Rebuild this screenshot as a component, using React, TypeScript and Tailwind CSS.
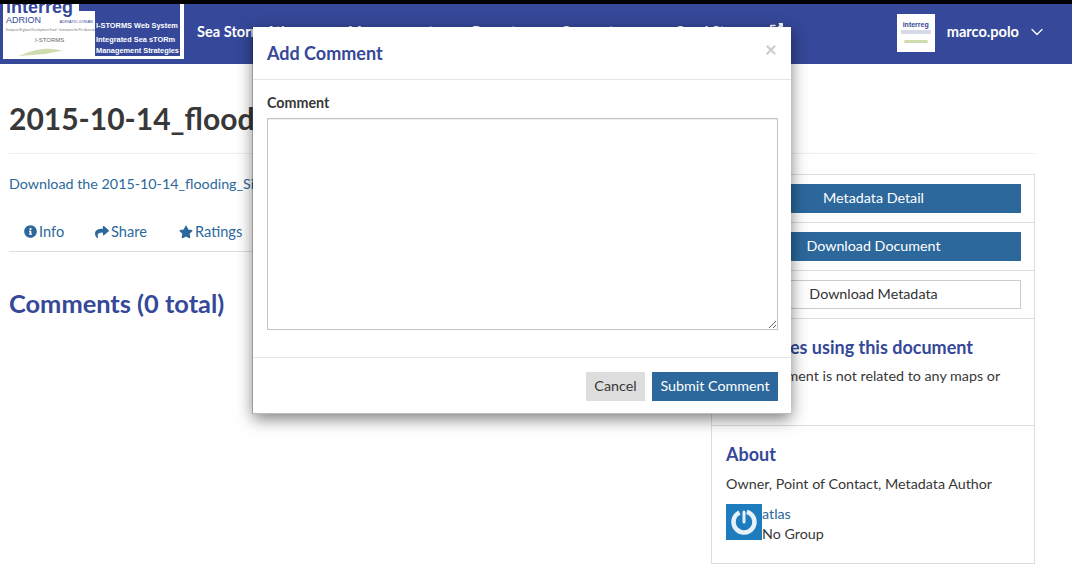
import { ChevronDown } from "lucide-react";
import { FaInfoCircle, FaShare, FaStar, FaExternalLinkAlt } from "react-icons/fa";

function Logo() {
  return (
    <div className="flex h-[55px] w-[181px] shrink-0 bg-white pr-[4px] pb-[3px]">
      <div className="relative w-[92px] shrink-0 overflow-hidden">
        <div className="-mt-[6px] pl-[3px] font-['Liberation_Sans',sans-serif] text-[18px] font-bold leading-[18px] text-[#354899]">interreg</div>
        <div className="flex items-baseline justify-between pl-[3px] pr-[2px] text-[#354899]">
          <span className="font-['Liberation_Sans',sans-serif] text-[9px] leading-[8px]">ADRION</span>
          <span className="font-['Liberation_Sans',sans-serif] text-[4px] leading-[8px]">ADRIATIC-IONIAN</span>
        </div>
        <div className="mt-[2px] h-[4px] overflow-hidden whitespace-nowrap pl-[3px] text-[3px] leading-[4px] text-[#777]">European Regional Development Fund - Instrument for Pre-Accession II Fund</div>
        <div className="mt-[4px] pl-[32px] font-['Liberation_Sans',sans-serif] text-[6px] leading-[8px] text-[#666]">I-STORMS</div>
        <svg className="mt-[4px] ml-[14px]" width="48" height="9" viewBox="0 0 48 9">
          <path d="M1 8C10 5 16 2 27 1c8-1 13 1 20 2-8 0-11 2-19 3-10 1-16 1-27 2z" fill="#cfdcae" />
        </svg>
        <div className="absolute top-0 right-[0px] h-[7px] w-[16px] bg-[#354899]" />
      </div>
      <div className="flex flex-1 flex-col justify-between bg-[#354899] pt-[16px] pb-[0px] pl-[1px] font-['Liberation_Sans',sans-serif] text-[7.4px] font-bold leading-[11px] text-white">
        <div className="whitespace-nowrap">I-STORMS Web System</div>
        <div className="whitespace-nowrap">Integrated Sea sTORm<br />Management Strategies</div>
      </div>
    </div>
  );
}

function SideButton({ label, variant }: { label: string; variant: "primary" | "default" }) {
  return (
    <div className="border-b border-[#ddd] pl-[14px] pr-[13px] py-[9px]">
      <div className={variant === "primary"
        ? "flex h-[29px] items-center justify-center bg-[#2c689c] pb-[1px] text-white"
        : "flex h-[29px] items-center justify-center border border-[#ccc] bg-white pb-[1px] text-[#333]"}>
        {label}
      </div>
    </div>
  );
}

function PowerAvatar() {
  return (
    <div className="flex h-[36px] w-[36px] shrink-0 items-center justify-center bg-[#1c7cbd]">
      <svg width="28" height="28" viewBox="0 0 28 28" fill="none" stroke="#e6f1f8">
        <circle cx="14" cy="14" r="10.5" strokeWidth="4.5" strokeDasharray="58 8" transform="rotate(-74 14 14)" />
        <path d="M14 4v10" strokeWidth="3" strokeLinecap="round" />
      </svg>
    </div>
  );
}

export default function App() {
  return (
    <div className="relative h-[584px] w-[1072px] overflow-hidden bg-white font-['Lato',sans-serif] text-[14.3px] text-[#383838]">
      {/* Navbar */}
      <header className="flex h-[64px] items-start border-t-[4px] border-black bg-[#354899]">
        <div className="ml-[3px]"><Logo /></div>
        <nav className="ml-[13px] flex h-[55px] items-center whitespace-nowrap text-[14.6px] font-bold text-white">
          <span className="w-[151px]">Sea Storm Atlas</span>
          <span className="w-[124px]">Management</span>
          <span className="w-[90px]">Reports</span>
          <span className="w-[114px]">Support</span>
          <span className="w-[94px]">Send Story</span>
          <FaExternalLinkAlt size={13} className="-mt-[4px]" />
        </nav>
        <div className="ml-auto mr-[25px] flex h-[55px] items-center text-[14.6px] font-bold text-white">
          <div className="mt-[3px] mr-[12px] flex h-[38px] w-[38px] flex-col items-center bg-white pt-[7px]">
            <div className="font-['Liberation_Sans',sans-serif] text-[7px] font-bold leading-[7px] text-[#354899]">interreg</div>
            <div className="mt-[2px] h-[4px] w-[30px] bg-[#d5d9e8]" />
            <div className="mt-[6px] h-[3px] w-[24px] rounded-full bg-[#cfdcae]" />
          </div>
          <span>marco.polo</span>
          <ChevronDown className="ml-[8px]" size={20} strokeWidth={1.5} />
        </div>
      </header>

      {/* Page */}
      <main className="pl-[9px] pr-[37px]">
        <h1 className="mt-[36px] h-[36px] whitespace-nowrap text-[30px] font-bold leading-[36px]">2015-10-14_flooding_Sites</h1>
        <div className="mt-[17px] border-t border-[#eee]" />
        <div className="flex">
          <div className="w-[702px] shrink-0">
            <p className="mt-[20px] h-[20px] leading-[20px] text-[#2c689c]">Download the 2015-10-14_flooding_Sites</p>
            <ul className="mt-[18px] flex h-[40px] items-center border-b border-[#ddd] pt-[1px] pl-[15px] text-[14.6px] text-[#2c689c]">
              <li className="flex w-[71px] items-center gap-[1px]"><FaInfoCircle size={13} className="mr-[1px]" />Info</li>
              <li className="flex w-[84px] items-center gap-[1px]"><FaShare size={14} className="mr-[1px]" />Share</li>
              <li className="flex items-center gap-[1px]"><FaStar size={14} className="mr-[1px]" />Ratings</li>
            </ul>
            <h2 className="mt-[37px] text-[25.4px] font-bold leading-[28px] text-[#354899]">Comments (0 total)</h2>
          </div>
          {/* Sidebar */}
          <aside className="mt-[20px] h-[390px] flex-1 border border-[#ddd]">
            <SideButton label="Metadata Detail" variant="primary" />
            <SideButton label="Download Document" variant="primary" />
            <SideButton label="Download Metadata" variant="default" />
            <div className="border-b border-[#ddd] px-[14px] pt-[18px] pb-[19px]">
              <h4 className="whitespace-nowrap text-[18px] font-bold leading-[20px] text-[#354899]">Resources using this document</h4>
              <p className="mt-[9px] leading-[20px]">This document is not related to any maps or layers.</p>
            </div>
            <div className="px-[14px] pt-[18px]">
              <h4 className="text-[18px] font-bold leading-[20px] text-[#354899]">About</h4>
              <p className="mt-[10px] leading-[20px]">Owner, Point of Contact, Metadata Author</p>
              <div className="mt-[10px] flex leading-[20px]">
                <PowerAvatar />
                <div>
                  <div className="text-[#2c689c]">atlas</div>
                  <div>No Group</div>
                </div>
              </div>
            </div>
          </aside>
        </div>
      </main>

      {/* Modal */}
      <div className="absolute left-[253px] top-[27px] w-[538px] border-b border-[#bbb] bg-white shadow-[0_5px_15px_rgba(0,0,0,0.5),-1px_0_0_rgba(0,0,0,0.2)]">
        <div className="flex h-[53px] items-center justify-between border-b border-[#e5e5e5] px-[14px]">
          <h4 className="text-[18px] font-bold text-[#354899]">Add Comment</h4>
          <span className="-mt-[8px] text-[21px] font-bold text-[#ccc]">×</span>
        </div>
        <div className="h-[278px] border-b border-[#e5e5e5] px-[14px] pt-[13px]">
          <label className="block h-[25px] font-bold leading-[20px]">Comment</label>
          <textarea className="block h-[212px] w-[511px] resize-y border border-[#c4c4c4] bg-white shadow-[inset_0_1px_1px_rgba(0,0,0,0.075)] outline-none" />
        </div>
        <div className="flex h-[55px] items-start justify-end gap-[7px] pr-[13px] pt-[14px]">
          <button className="flex h-[29px] w-[59px] items-center justify-center bg-[#ddd] pb-[1px] text-[#383838]">Cancel</button>
          <button className="flex h-[29px] w-[126px] items-center justify-center bg-[#2c689c] pb-[1px] text-white">Submit Comment</button>
        </div>
      </div>
    </div>
  );
}
